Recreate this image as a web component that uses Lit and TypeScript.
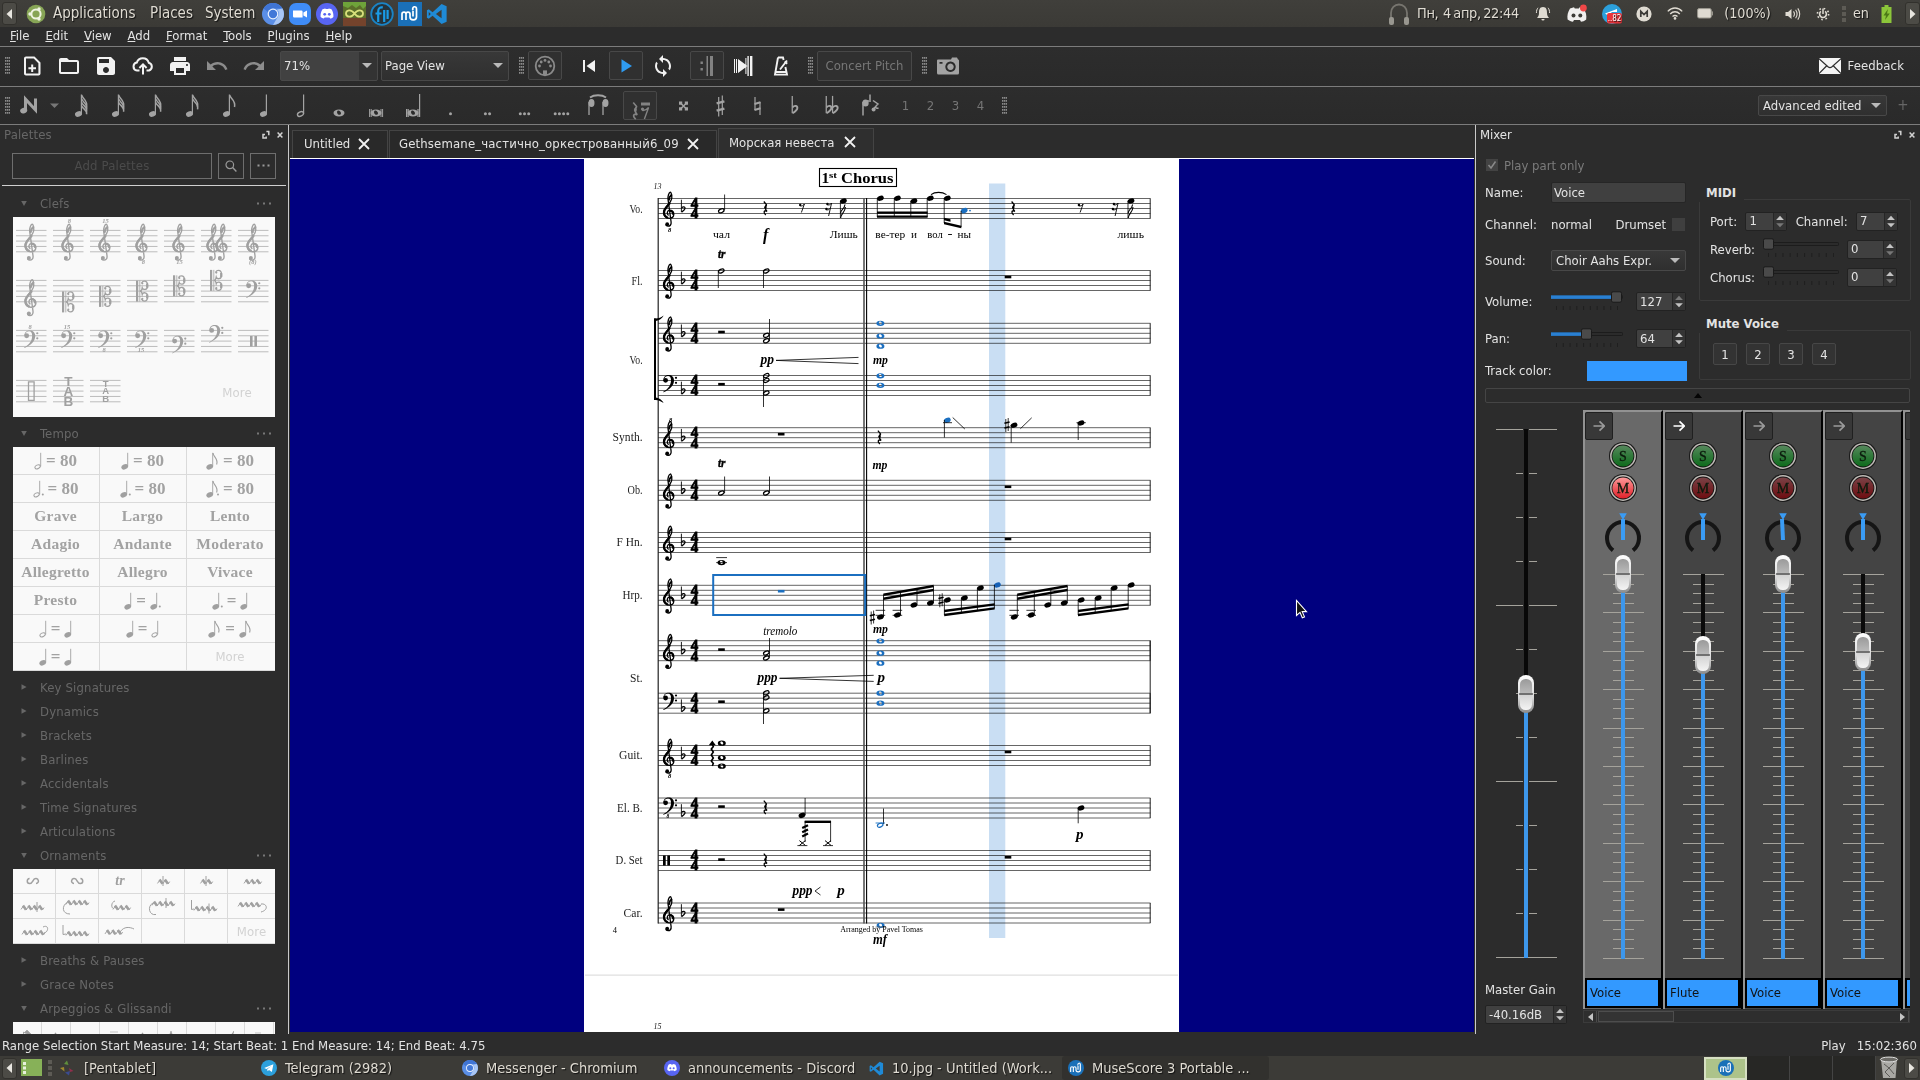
import { LitElement, html, svg, css, nothing } from "lit";
import { customElement } from "lit/decorators.js";

const BLUE = "#1b6fc0";

/* ---------- music glyphs ---------- */
const gClef = (x: number, y: number, c = "#000", s = 1, ott: any = nothing) => svg`
  <g transform="translate(${x} ${y}) scale(${s})" fill="none" stroke=${c} stroke-linecap="round">
    <path stroke-width="1.3" d="M5.6 1.9C3.9 .6 4.6-2.9 7-2.9C9.9-2.9 11.3-.9 11.2 1.2C11 3.9 9 5.1 6.6 5.1C3.2 5.1 .9 2.6 .9-1C.9-6 8.9-9.5 9.2-15.5C9.3-18.5 8.5-21 7.7-21C6.2-20.5 5.1-17 5.4-14L8.5 8.8C8.9 11.8 7.2 13 5.6 13C4.6 13 3.9 12.6 3.5 12"/>
    <path stroke-width="2.2" d="M4.6 4.2C2.4 3.2 1.3 1.2 1.5-1.3C1.9-4.5 5-7 7-9.8"/>
    <path stroke-width="2.1" d="M7.2-2.6C9.3-2.6 10.5-1 10.5 .8"/>
    <path stroke-width="1.9" d="M6.4-13.5C6.3-16 8-17.6 8.8-18.2"/>
    <circle cx="4.6" cy="11" r="1.9" fill=${c} stroke="none"/>
  </g>${ott}`;
const fClef = (x: number, y: number, c = "#000", s = 1) => svg`
  <g transform="translate(${x} ${y}) scale(${s})" fill=${c}>
    <circle cx="2.6" cy="0" r="2.4"/>
    <path d="M.4 0C.4-3.5 2.8-5.2 5.6-5.2C8.8-5.2 11-3.2 11 .2C11 5 7.2 9 .6 12C.2 12.2-.1 11.8 .3 11.5C5.4 8.6 8 5 8-.2C8-2.8 7-4.4 5-4.4C3.2-4.4 1.6-3.2 1.2-1.2Z"/>
    <circle cx="13" cy="-2.5" r="1.1"/><circle cx="13" cy="2.5" r="1.1"/>
  </g>`;
const cClef = (x: number, y: number, c: string) => svg`
  <g transform="translate(${x} ${y})" fill="none" stroke=${c}>
    <path stroke-width="2.2" d="M1.1-10.5V10.5"/><path stroke-width=".8" d="M3.8-10.5V10.5"/>
    <path stroke-width="1.3" d="M4 0C6 0 6-2.5 6.2-3.4C7-1 11.6-.6 11.6-5.4C11.6-10 9.4-10 8.4-10C7-10 5.8-9.2 5.8-8"/>
    <path stroke-width="1.3" d="M4 0C6 0 6 2.5 6.2 3.4C7 1 11.6 .6 11.6 5.4C11.6 10 9.4 10 8.4 10C7 10 5.8 9.2 5.8 8"/>
    <path stroke-width="2.2" d="M11.2-7.5V-3.3M11.2 3.3V7.5"/>
    <circle cx="6.3" cy="-7.8" r="1.1" fill=${c} stroke="none"/><circle cx="6.3" cy="7.8" r="1.1" fill=${c} stroke="none"/>
  </g>`;
const flat = (x: number, y: number, c = "#000", s = 1) => svg`
  <g transform="translate(${x} ${y}) scale(${s})" fill="none" stroke=${c}><path stroke-width=".9" d="M-1.6-9V3.4"/><path stroke-width="1.3" d="M-1.4-.8C.2-2.6 2.4-1.9 2 0C1.7 1.4 0 2.5-1.4 3.4"/></g>`;
const sharp = (x: number, y: number, c = "#000", s = 1) => svg`
  <g transform="translate(${x} ${y}) scale(${s})" stroke=${c}><path stroke-width=".8" d="M-1.2-6V7M1.2-7V6"/><path stroke-width="1.6" d="M-2.6-1.7L2.6-3.1M-2.6 3.1L2.6 1.7"/></g>`;
const head = (x: number, y: number, c = "#000") => svg`<ellipse cx=${x} cy=${y} rx="3.5" ry="2.5" transform=${`rotate(-22 ${x} ${y})`} fill=${c}/>`;
const hhead = (x: number, y: number, c = "#000") => svg`<ellipse cx=${x} cy=${y} rx="2.9" ry="1.8" transform=${`rotate(-24 ${x} ${y})`} fill="none" stroke=${c} stroke-width="1.2"/>`;
const whole = (x: number, y: number, c = "#000") => svg`<path fill=${c} fill-rule="evenodd" d=${`M${x - 4} ${y}a4 2.6 0 1 0 8 0a4 2.6 0 1 0-8 0M${x - 1.5} ${y - 0.6}c0-1.8 2.6-1.5 3 .6c0 1.8-2.6 1.8-3-.6z`}/>`;
const vl = (x: number, a: number, b: number, w = 0.8, c = "#000") => svg`<path d=${`M${x} ${a}V${b}`} stroke=${c} stroke-width=${w}/>`;
const ln = (x1: number, y1: number, x2: number, y2: number, w = 0.8, c = "#000") => svg`<path d=${`M${x1} ${y1}L${x2} ${y2}`} stroke=${c} stroke-width=${w}/>`;
const beam = (x1: number, y1: number, x2: number, y2: number) => svg`<path d=${`M${x1} ${y1 - 1.2}L${x2} ${y2 - 1.2}V${y2 + 1.2}L${x1} ${y1 + 1.2}Z`}/>`;
const rest = (x: number, y: number, c = "#000") => svg`<rect x=${x - 3.3} y=${y - 1.3} width="6.6" height="2.6" fill=${c}/>`;
const qrest = (x: number, y: number, c = "#000", s = 1) => svg`<path transform=${`translate(${x} ${y}) scale(${s})`} fill="none" stroke=${c} stroke-width="1.3" d="M-1.4-6.8L1.4-3.4C-.6-1.6-1 -.6 1.8 3C-1.4 1.8-2.2 4 .6 6.6" stroke-linejoin="bevel"/><path transform=${`translate(${x} ${y}) scale(${s})`} d="M1-4L-1-.8L.8 1.4L1.5-1Z" fill=${c}/>`;
const erest = (x: number, y: number, n = 1, c = "#000") => svg`
  <g transform="translate(${x} ${y})" stroke=${c} fill="none" stroke-width=".9">
    <circle cx="-1.6" cy="-3" r="1.2" fill=${c} stroke="none"/><path d=${`M-1.6-2.2C0-1.6 1.6-2.4 2.6-4L-.4 ${n === 1 ? 4.5 : 9}`}/>
    ${n === 2 ? svg`<circle cx="-2.6" cy="2" r="1.2" fill=${c} stroke="none"/><path d="M-2.6 2.8C-1 3.2 .2 2.6 1 1.4"/>` : nothing}
  </g>`;
const txt = (x: number, y: number, s: string, size: number, len = 0, cls = "", anchor = "start") =>
  len
    ? svg`<text x=${x} y=${y} font-size=${size} class=${cls} text-anchor=${anchor} textLength=${len} lengthAdjust="spacingAndGlyphs">${s}</text>`
    : svg`<text x=${x} y=${y} font-size=${size} class=${cls} text-anchor=${anchor}>${s}</text>`;

const STAVES: [number, string][] = [
  [198.5, "g"], [270.5, "g"], [323.3, "g"], [375.5, "f"], [427.7, "g"], [480.3, "g"], [532.5, "g"],
  [585.3, "g"], [640.7, "g"], [693.2, "f"], [745.5, "g"], [798, "f"], [850.5, "p"], [903, "g"],
];
const LABELS: [string, number, number][] = [
  ["Vo.", 209, 13], ["Fl.", 281, 11], ["Vo.", 360, 13], ["Synth.", 437.5, 30], ["Ob.", 490.5, 15],
  ["F Hn.", 542.5, 26], ["Hrp.", 594.7, 20], ["St.", 677.7, 12.5], ["Guit.", 755.5, 23.5],
  ["El. B.", 807.7, 25.5], ["D. Set", 860.5, 27], ["Car.", 913.5, 19],
];

const staff = ([y, k]: [number, string]) => svg`
  <path class="sl" d=${[0, 5, 10, 15, 20].map((d) => `M658 ${y + d}H1150.5`).join("")}/>
  ${vl(1150.2, y, y + 20, 1, "#222")}
  ${k === "g" ? gClef(662.6, y + 14.7) : k === "f" ? fClef(663, y + 4.8) : svg`<path d=${`M663 ${y + 5}h2.7v10h-2.7zM667.3 ${y + 5}h2.7v10h-2.7z`}/>`}
  ${k === "p" ? nothing : flat(683, y + (k === "g" ? 10.2 : 15.2))}
  <text class="ts" x="694.6" y=${y + 9.7} text-anchor="middle">4</text>
  <text class="ts" x="694.6" y=${y + 19.9} text-anchor="middle">4</text>`;

const arpUp = (x: number, sh: boolean, blueLast = false) => svg`
  ${sh ? sharp(x - 8, 617.5) : nothing}
  ${[[0, 617], [17, 615], [33.5, 605], [50, 603]].map(([d, y]) => svg`${head(x + d, y)}${vl(x + d + 3.1, y, 594.5 - (d / 50) * 8.5)}`)}
  ${ln(x - 4.8, 610.3, x + 4.8, 610.3)}${ln(x - 4.8, 615.3, x + 4.8, 615.3)}${ln(x + 12.2, 610.3, x + 21.8, 610.3)}${ln(x + 12.2, 615.3, x + 21.8, 615.3)}
  ${beam(x + 3, 594.8, x + 53.3, 586)}${beam(x + 3, 598.8, x + 53.3, 590)}
  ${sh ? sharp(x + 60.6, 600.3) : nothing}
  ${[[67, 600], [84, 598], [100, 588], [117, 585]].map(([d, y], i) => svg`${head(x + d, y, blueLast && i === 3 ? BLUE : "#000")}${vl(x + d - 3, y, 615 - ((d - 67) / 50) * 6.5)}`)}
  ${beam(x + 63.8, 615, x + 114.3, 608.4)}${beam(x + 63.8, 611, x + 114.3, 604.4)}`;

const score = () => svg`
  <rect x="290" y="158" width="1184" height="1" fill="#fff"/>
  <rect x="584" y="158" width="595" height="874" fill="#fff"/>
  <rect x="585" y="974.6" width="593" height="1" fill="#d8d8d8"/>
  ${STAVES.map(staff)}
  ${vl(658.2, 198, 923.5, 1.2, "#222")}
  ${vl(864, 198, 923.5, 1.6, "#555")}${vl(866.6, 198, 923.5, 1.1)}
  ${vl(1150.2, 640.7, 713.2, 1, "#222")}
  <path d="M654 318.5h2V400h-2z"/><path d="M654 320.5V318.5C658 319 661 317.5 663.6 315.5C661.5 319.5 658 321 654 321ZM654 397.5V400C658 399.5 661 401 663.6 403C661.5 399 658 397.6 654 397.5Z"/>
  ${LABELS.map(([s, y, w]) => txt(642.6, y + 3.9, s, 12, w, "lab", "end"))}
  <rect x="819.5" y="168.5" width="77" height="18" fill="none" stroke="#000" stroke-width="1.1"/>
  ${txt(821.5, 183, "1", 15.5, 0, "b")}${txt(829, 177.5, "st", 9, 8, "b")}${txt(841, 183, "Chorus", 15.5, 52.5, "b")}
  ${txt(653.5, 188.6, "13", 9, 8, "i lab")}${txt(653.5, 1029.4, "15", 9, 8, "i lab")}
  ${txt(668, 231.5, "8", 6.5, 0, "bi")}${txt(668, 778, "8", 6.5, 0, "bi")}${txt(669, 421.5, "8", 6.5, 0, "bi")}${txt(666.5, 818, "8", 5.5, 0, "bi")}

  ${hhead(721.3, 210.8)}${vl(724.6, 194.5, 210)}
  ${qrest(765.2, 208.3)}${erest(801.8, 208)}${erest(829, 207, 2)}
  ${head(843.4, 201)}${vl(840.4, 201, 218)}<path fill="none" stroke="#000" stroke-width="1.1" d="M840.6 218C841 213 845 213 845.4 207M840.6 213C841 209 844.5 209 845 204.5"/>
  ${[[880.4, 198.3], [897.4, 198.3], [913.9, 201], [930.3, 198.3]].map(([x, y]) => svg`${head(x, y)}${vl(x - 3.1, y, 217)}`)}
  ${beam(877, 212.6, 927.6, 212.6)}${beam(877, 216.6, 927.6, 216.6)}
  <path fill="none" stroke="#000" stroke-width="1.1" d="M931 194.6C935 191.6 942 191.6 946.5 194.6"/>
  ${head(947.3, 198.3)}${vl(944.2, 198, 223)}${beam(944, 223, 961.3, 227)}${beam(944, 219, 950.5, 220.5)}
  ${head(964.2, 210.6, BLUE)}${vl(961.1, 211, 227)}<circle cx="970" cy="210.6" r=".9" fill=${BLUE}/>
  ${qrest(1013, 208.3)}${erest(1080.5, 208)}${erest(1115.5, 207, 2)}
  ${head(1131, 201)}${vl(1128, 201, 218)}<path fill="none" stroke="#000" stroke-width="1.1" d="M1128.2 218C1128.6 213 1132.6 213 1133 207M1128.2 213C1128.6 209 1132 209 1132.6 204.5"/>
  ${txt(713, 238, "чал", 11, 17)}${txt(763, 239.5, "f", 16, 0, "bi")}${txt(829.8, 238, "Лишь", 11, 28)}
  ${txt(875.3, 238, "ве-тер", 11, 30)}${txt(911, 238, "и", 11, 6)}${txt(927.3, 238, "вол", 11, 15.5)}${txt(947.5, 238, "-", 12, 5)}${txt(957.5, 238, "ны", 11, 13.5)}${txt(1117.5, 238, "лишь", 11, 26.5)}

  ${txt(718, 258, "tr", 12, 7.5, "bi k")}
  ${hhead(721.3, 271)}${vl(718.3, 271, 288)}${hhead(766.3, 271)}${vl(763.5, 271, 288)}${rest(1008, 277)}

  ${rest(721.5, 332)}${hhead(766.3, 335.3)}${hhead(766.3, 340.8)}${vl(769.5, 319, 341)}
  ${[323.3, 336, 346.2].map((y) => whole(880.4, y, BLUE))}
  ${rest(721.5, 384.2)}${[375.6, 380.4, 393].map((y) => hhead(766.3, y))}${vl(763.5, 375.5, 407)}
  ${[375.8, 385.3].map((y) => whole(880.4, y, BLUE))}
  ${txt(760.5, 363.5, "pp", 15, 13.5, "bi")}<path fill="none" stroke="#000" stroke-width=".8" d="M858.5 357.4L776 360.4L858.5 363.6"/>${txt(873, 363.5, "mp", 13, 15, "bi")}

  ${rest(781.2, 434.2)}${qrest(879.3, 437.5)}
  ${head(947.3, 420.3, BLUE)}${vl(944.4, 420, 437.5)}${ln(943, 422.7, 952, 422.7)}${ln(952.7, 417.5, 964.8, 429)}
  ${sharp(1007, 425)}${head(1014, 425.2)}${vl(1011.2, 425, 442.7)}${ln(1020.4, 428.7, 1031.7, 417.8)}
  ${head(1081, 423)}${vl(1078.2, 423, 440)}${ln(1076.5, 422.7, 1085.8, 422.7)}
  ${txt(872.5, 468.5, "mp", 13, 15, "bi")}
  ${txt(718, 467, "tr", 12, 7.5, "bi k")}
  ${hhead(721.3, 493)}${vl(724.6, 476.5, 493)}${hhead(766.3, 493)}${vl(769.5, 476.5, 493)}${rest(1008, 486.8)}
  ${whole(721.5, 562.6)}${ln(716.2, 557.6, 727, 557.6)}${ln(716.2, 562.6, 727, 562.6)}${rest(1008, 539)}

  <rect x="713.2" y="575" width="152" height="40" fill="none" stroke=${BLUE} stroke-width="2"/>
  ${rest(781.2, 591.2, BLUE)}
  ${arpUp(880.4, true, true)}${arpUp(1014.2, false)}
  ${txt(873, 632.5, "mp", 13, 15, "bi")}${txt(763.3, 634.6, "tremolo", 11.5, 34, "it")}

  ${rest(721.5, 649.6)}${hhead(766.3, 653)}${hhead(766.3, 658)}${vl(769.5, 638, 657.5)}
  ${[641, 653.2, 663.2].map((y) => whole(880.4, y, BLUE))}
  ${txt(757.5, 681.5, "ppp", 15, 20, "bi")}<path fill="none" stroke="#000" stroke-width=".8" d="M873.7 675.3L779.6 678.3L873.7 681.4"/>${txt(877.5, 681.5, "p", 15, 0, "bi")}
  ${rest(721.5, 701.7)}${[692.8, 697.8, 710.8].map((y) => hhead(766.3, y))}${vl(763.5, 693, 724)}
  ${[693.2, 703.2].map((y) => whole(880.4, y, BLUE))}

  ${[743.2, 757.8, 766.2].map((y) => whole(721.8, y))}
  <path d="M712.3 740.6L715.8 745.2H708.8Z"/><path d="M712.3 744l1 2.5-2 2.5 2 3-2 3 2 3-2 3 2 2.5-1 2.5" fill="none" stroke="#000" stroke-width="1.6"/>
  ${rest(1008, 752)}

  ${rest(721.5, 806.6)}${qrest(765.2, 807.5)}${head(802, 815.4)}${vl(805.1, 798, 815)}
  ${beam(804.7, 821.8, 831, 821.8)}${vl(805.1, 821, 842)}${vl(830.6, 821, 842)}
  ${[828, 832.2, 836.4].map((y) => ln(802.2, y, 808, y - 2.8, 2.2))}
  ${[802.4, 828].map((x) => svg`${ln(x - 3, 840.6, x + 3, 845.4, 1)}${ln(x - 3, 845.4, x + 3, 840.6, 1)}${ln(x - 5, 845.6, x + 5, 845.6)}`)}
  ${hhead(880.2, 825.2, BLUE)}${vl(883.5, 808.5, 824)}${ln(875.6, 823, 885, 823, 0.9, BLUE)}<circle cx="887" cy="825" r=".9"/>
  ${head(1081, 808)}${vl(1078.2, 808, 823.3)}${txt(1076, 839, "p", 15, 0, "bi")}

  ${rest(721.5, 859.6)}${qrest(765.2, 860.5)}${rest(1008, 857.3)}
  ${txt(792.5, 895, "ppp", 15, 20, "bi")}<path fill="none" stroke="#000" stroke-width=".8" d="M820.5 887L815 891L820.5 895"/>${txt(837.3, 895, "p", 15, 0, "bi")}

  ${rest(781.2, 909.6)}${whole(880.6, 925.3, BLUE)}${ln(875.5, 927, 886, 927, 0.7, "#555")}
  ${txt(840.3, 931.5, "Arranged by Pavel Tomas", 8.6, 82.5)}${txt(873, 944.3, "mf", 14, 14, "bi")}${txt(612.7, 933.3, "4", 8.5, 0)}
  <rect x="989" y="183.5" width="16.3" height="754.5" class="cur"/>
  <path d="M1296.5 600.5V615.5L1300 612.4L1302.3 617.8L1304.5 616.9L1302.2 611.6H1306.5Z" fill="#111" stroke="#fff" stroke-width="1.1"/>`;

/* ---------- small widgets ---------- */
const mat = (d: string, c = "#f2f2f2") => html`<svg width="24" height="24" viewBox="0 0 24 24"><path fill=${c} d=${d}/></svg>`;
const grip = html`<svg class="grip" width="5" height="18" viewBox="0 0 5 18">${[0, 1, 2, 3, 4, 5].map((i) => svg`<path d=${`M0 ${i * 3 + 0.9}h1.4M1.9 ${i * 3 + 0.9}h1.4M3.8 ${i * 3 + 0.9}h1.4`} stroke="#8a8a8a" stroke-width="1.6"/>`)}</svg>`;
const sq = (body: any, w = 37) => html`<svg width=${w} height="38" viewBox=${`0 0 ${w} 38`}>${body}</svg>`;
const G = "#a3a3a3";
const tnote = (n: number) => sq(svg`
  <ellipse cx="16.5" cy="27" rx="3.6" ry="2.7" transform="rotate(-20 16.5 27)" fill=${G}/>
  <path d="M19.4 7.5V26.5" stroke=${G} stroke-width="1.2"/>
  ${Array.from({ length: n }, (_, i) => svg`<path fill="none" stroke=${G} stroke-width="1.5" d=${`M19.6 ${8 + i * 3.6}C20.5 ${12 + i * 3.4} 26 ${13 + i * 3.4} ${24.5} ${20 + i * 2.4}`}/>`)}`);
const wholeBody = (x: number, y: number) => svg`<path fill=${G} fill-rule="evenodd" d=${`M${x - 5.5} ${y}a5.5 3.4 0 1 0 11 0a5.5 3.4 0 1 0-11 0M${x - 2} ${y - 0.8}c0-2.6 3.4-2 4 .8c0 2.6-3.4 2.6-4-.8z`}/>`;
const dots = (n: number) => sq(svg`${Array.from({ length: n }, (_, i) => svg`<circle cx=${18.5 + (i - (n - 1) / 2) * 4.2} cy="26.7" r="1.5" fill=${G}/>`)}`);
const spin = (v: string, cls: string, u = true, d = true) => html`<div class="spin ${cls}"><span>${v}</span><svg width="13" height="19" viewBox="0 0 13 19"><path d="M2.3 7.8H10.7L6.5 3.4Z" fill=${u ? "#c4c4c4" : "#777"}/><path d="M2.3 11.4H10.7L6.5 15.8Z" fill=${d ? "#c4c4c4" : "#777"}/></svg></div>`;
const slider = (w: number, p: number) => html`<svg width=${w} height="22" viewBox=${`0 0 ${w} 22`}>
  <rect x=".5" y="4.5" width=${w - 1} height="3" rx="1" fill="#2b2b2b" stroke="#1c1c1c"/>
  ${p > 0 ? svg`<rect x="0" y="4.3" width=${p} height="3.6" fill="#2a80d2"/>` : nothing}
  ${Array.from({ length: 10 }, (_, i) => svg`<path d=${`M${5.5 + (i * (w - 11)) / 9} 15v4`} stroke="#1f1f1f"/>`)}
  <rect x=${p + 0.5} y=".8" width="10" height="10.4" rx="1.5" fill="#4a4a4a" stroke="#1a1a1a"/></svg>`;
const dockBtns = html`<svg class="dock" width="24" height="12" viewBox="0 0 24 12"><g fill="none" stroke="#d2d2d2" stroke-width="1.5"><path d="M4.4 2.6H6.8V6.2M3 5.4H1V9H4.2V7.4M15.6 3.4L20.4 8.4M20.4 3.4L15.6 8.4"/></g></svg>`;
const capGrad = svg`<defs>
  <linearGradient id="cap" x1="0" y1="0" x2="0" y2="1"><stop offset="0" stop-color="#9a9a9a"/><stop offset=".5" stop-color="#bdbdbd"/><stop offset=".52" stop-color="#d4d4d4"/><stop offset="1" stop-color="#f4f4f4"/></linearGradient>
  <linearGradient id="rim" x1="0" y1="0" x2="0" y2="1"><stop offset="0" stop-color="#fff"/><stop offset=".6" stop-color="#d8d8d8"/><stop offset="1" stop-color="#8a8a8a"/></linearGradient></defs>`;
const cap = (x: number, y: number) => svg`<rect x=${x - 8} y=${y - 19} width="16" height="38" rx="8" fill="url(#rim)"/><rect x=${x - 6} y=${y - 15} width="12" height="31" rx="5.5" fill="url(#cap)"/><path d=${`M${x - 7} ${y}h14`} stroke="#333" stroke-width="1.1"/>`;
const roundBtn = (x: number, y: number, s: string, id: string, a: string, b: string) => svg`
  <defs><linearGradient id=${id} x1="0" y1="0" x2="0" y2="1"><stop offset="0" stop-color=${a}/><stop offset="1" stop-color=${b}/></linearGradient></defs>
  <circle cx=${x} cy=${y} r="14" fill="#191919"/><circle cx=${x} cy=${y} r="12.9" fill="#bfbbb6"/><circle cx=${x} cy=${y} r="11.4" fill="#151515"/><circle cx=${x} cy=${y} r="10.6" fill=${`url(#${id})`}/>
  <text x=${x} y=${y + 5.2} text-anchor="middle" class="rb">${s}</text>`;

/* strip drawing; local origin is screen y 440, x centre 38 */
const stripBody = (lvl: number, mute: boolean, tilt: number) => html`<svg width="76" height="538" viewBox="0 440 76 538">
  ${capGrad}
  ${roundBtn(38, 456, "S", "solo", "#56885c", "#0d6b1b")}
  ${mute ? roundBtn(38, 488, "M", "muteOn", "#ff9a9a", "#e01f28") : roundBtn(38, 488, "M", "muteOff", "#7a4246", "#6d0c10")}
  <path d="M28 550.4A16 16 0 1 1 48 550.4" fill="none" stroke="#151515" stroke-width="4"/>
  <path d="M34.2 513.3H41.8L38 520Z" fill="#3a9cf5"/><path d=${`M${38 - tilt} 519L38 540`} stroke="#3a9cf5" stroke-width="4"/>
  <g stroke="#a5a39c" stroke-width="1">${Array.from({ length: 41 }, (_, i) => {
    const y = Math.round(574 + i * 9.6) + 0.5;
    return i % 4 ? svg`<path d=${`M28 ${y}h21`}/>` : svg`<path d=${`M18 ${y}h41`}/>`;
  })}</g>
  <rect x="36" y="574" width="4" height="385" fill="#0a0a0a"/><rect x="36" y=${lvl} width="4" height=${959 - lvl} fill="#3d97ec"/>
  ${cap(38, lvl)}
</svg>`;

const STRIPS: { n: string; lvl: number; mute: boolean; on: boolean; tilt: number }[] = [
  { n: "Voice", lvl: 574, mute: true, on: false, tilt: 0 },
  { n: "Flute", lvl: 655, mute: false, on: true, tilt: 0 },
  { n: "Voice", lvl: 574, mute: false, on: false, tilt: 1 },
  { n: "Voice", lvl: 652, mute: false, on: false, tilt: 0 },
];

/* ---------- palettes ---------- */
const PC = "#a0a0a0";
const clefGrid = () => {
  const cells: ((x: number, y: number) => any)[] = [];
  const o = (dy: number, s: string) => (x: number, y: number) => svg`${gClef(x + 8, y + 16, PC, 1.06)}<text x=${x + 17 - s.length * 0.7} y=${y + dy} font-size="6.5" class="bi" fill=${PC} text-anchor="middle">${s}</text>`;
  const f = (dl: number, s = "", dy = 0) => (x: number, y: number) => svg`${fClef(x + 8, y + dl, PC, 1.02)}${s ? svg`<text x=${x + 14} y=${y + dy} font-size="6.5" class="bi" fill=${PC} text-anchor="middle">${s}</text>` : nothing}`;
  const c = (dl: number) => (x: number, y: number) => cClef(x + 9, y + dl, PC);
  cells.push(
    (x, y) => gClef(x + 8, y + 16, PC, 1.06), o(-7.4, "8"), o(-7.4, "15"), o(34, "8"), o(34, "15"),
    (x, y) => svg`${gClef(x + 5, y + 16, PC, 1.06)}${gClef(x + 14, y + 16, PC, 1.06)}`, o(34, "(8)"),
    (x, y) => gClef(x + 8, y + 21.5, PC, 1.06), c(21.5), c(16), c(10.7), c(5.4), c(0), f(5.4),
    f(5.4, "8", -1), f(5.4, "15", -1), f(5.4, "8", 22), f(5.4, "15", 22), f(10.7), f(0),
    (x, y) => svg`<path fill=${PC} d=${`M${x + 12} ${y + 5.5}h2.6v10.6h-2.6zM${x + 16.4} ${y + 5.5}h2.6v10.6h-2.6z`}/>`,
    (x, y) => svg`<path fill="none" stroke=${PC} stroke-width="1.3" d=${`M${x + 12.5} ${y + 1.5}h5.6v18.4h-5.6z`}/>`,
    (x, y) => svg`${["T", "A", "B"].map((s, i) => svg`<text x=${x + 15.3} y=${y + 5.5 + i * 10.2} class="tab" fill=${PC} font-size="13.5">${s}</text>`)}`,
    (x, y) => svg`${["T", "A", "B"].map((s, i) => svg`<text x=${x + 15.6} y=${y + 6.5 + i * 7.3} class="tab" fill=${PC} font-size="9.5">${s}</text>`)}`,
  );
  return html`<svg class="clefs" width="262" height="200" viewBox="0 0 262 200">
    ${cells.map((fn, i) => {
      const x = 3 + (i % 7) * 37, y = 13.4 + Math.floor(i / 7) * 50;
      return svg`<path stroke="#bcbcbc" stroke-width="1" d=${[0, 1, 2, 3, 4].map((k) => `M${x} ${y + k * 5.35}h30.5`).join("")}/>${fn(x, y)}`;
    })}
    <text x="224" y="180" text-anchor="middle" class="more">More</text></svg>`;
};
const tn = (k: string) => html`<svg class="tn" width=${k.includes("e") ? 13 : k.includes(".") ? 11 : 8} height="18" viewBox=${`0 0 ${k.includes("e") ? 13 : k.includes(".") ? 11 : 8} 18`}>
  ${k[0] === "h" ? svg`<ellipse cx="3.6" cy="14.8" rx="2.8" ry="1.8" transform="rotate(-25 3.6 14.8)" fill="none" stroke=${PC} stroke-width="1"/>` : svg`<ellipse cx="3.7" cy="14.8" rx="3.5" ry="2.5" transform="rotate(-25 3.7 14.8)" fill=${PC}/>`}
  <path d="M6.7 .8V14.4" stroke=${PC} stroke-width=".9"/>
  ${k.includes("e") ? svg`<path d="M7 1C7.4 5 12.8 7 10.6 12.5" fill="none" stroke=${PC} stroke-width="1.1"/>` : nothing}
  ${k.includes(".") ? svg`<circle cx=${k.includes("e") ? 12 : 9.8} cy="14.5" r="1" fill=${PC}/>` : nothing}</svg>`;
const TEMPO: any[] = [
  html`${tn("h")}<b>= 80</b>`, html`${tn("q")}<b>= 80</b>`, html`${tn("e")}<b>= 80</b>`,
  html`${tn("h.")}<b>= 80</b>`, html`${tn("q.")}<b>= 80</b>`, html`${tn("e.")}<b>= 80</b>`,
  ..."Grave Largo Lento Adagio Andante Moderato Allegretto Allegro Vivace Presto".split(" ").map((s) => html`<em>${s}</em>`),
  html`${tn("q")}<b>=</b>${tn("q.")}`, html`${tn("q.")}<b>=</b>${tn("q")}`,
  html`${tn("h")}<b>=</b>${tn("q")}`, html`${tn("q")}<b>=</b>${tn("h")}`, html`${tn("e")}<b>=</b>${tn("e")}`,
  html`${tn("q")}<b>=</b>${tn("q")}`, "", html`<span class="more">More</span>`,
];
const zig = (n: number, x: number, y: number) => svg`<path fill="none" stroke=${PC} stroke-width="1" d=${`M${x} ${y + 2.4}l2.4-3.4` + "m2.8 4l2.6-4".repeat(n) + "m2.8 4l1.6-2.4"}/><path fill="none" stroke=${PC} stroke-width="2.6" d=${`M${x + 2} ${y - 1.4}` + "l3 4.2m2.4-4.2".repeat(n) + "l3 4.2"}/>`;
const thin = (d: string) => svg`<path fill="none" stroke=${PC} stroke-width="1" d=${d}/>`;
const turn = svg`<path fill="none" stroke=${PC} stroke-width="1.5" d="M18 14.5C14 14 15.5 9 18.5 9.6C21.5 10 21 14.6 24.5 14.6C27.5 14.4 27.5 9.5 24.4 9.4"/>`;
const ORN: any[] = [
  svg`<g transform="translate(41 0) scale(-1 1)">${turn}</g>`, turn,
  svg`<text x="21" y="16" text-anchor="middle" class="bi" font-size="14" fill=${PC}>tr</text>`,
  svg`${zig(1, 15.5, 12)}${thin("M21 7V17")}`, svg`${zig(1, 15.5, 12)}${thin("M21 7V17")}`, zig(2, 13, 12),
  svg`${zig(3, 8, 13)}${thin("M24 8V18")}`, svg`${zig(3, 10, 8)}${thin("M11 8.5C5.5 12 6 20 14 20")}`,
  svg`${zig(2, 14, 13)}${thin("M16 7C12 8 12 14 14.5 14.5")}`, svg`${zig(3, 10, 9)}${thin("M11 9C5 12 7 22 14 20.5M24 4V14")}`,
  svg`${zig(3, 9, 14)}${thin("M6.5 6V15.5L9 15M24 9.5V19.5")}`, svg`${zig(3, 7, 10)}${thin("M30 10C36 9 38 16 30 18")}`,
  svg`${zig(3, 9, 13)}${thin("M31 14C36 13 36 5 30 8")}`, svg`${zig(3, 10, 14)}${thin("M7 6V15.5L10 15")}`,
  svg`${zig(2, 6, 12.5)}${thin("M21 13C25 7 31 8 35 10")}`, nothing, nothing,
];

@customElement("app-root")
export class AppRoot extends LitElement {
  static styles = css`
    :host { display: flex; flex-direction: column; width: 1920px; height: 1080px; overflow: hidden; background: #2c2c2c; color: #e3e3e3;
      font-family: "DejaVu Sans Condensed", "DejaVu Sans", sans-serif; font-stretch: condensed; font-size: 13px; line-height: 1; }
    * { box-sizing: border-box; }
    svg { display: block; flex: none; }
    .row { display: flex; align-items: center; white-space: nowrap; }
    .sp { flex: 1; }
    .panel { height: 27px; background: linear-gradient(#403f3b, #3b3a36); color: #dfdbd2; font-size: 15px; text-shadow: 1px 1px 1px #111; flex: none; }
    .ebtn { width: 15px; height: 23px; margin-left: 2px; border-radius: 3px; background: #4c4b46; border: 1px solid #32312d; display: grid; place-items: center; }
    .pl { display: grid; grid-template-columns: 26px 27px 97px 55px 57px 27px 27px 27px 27px 28px 28px 27px; align-items: center; justify-items: start; }
    .pr { display: grid; grid-template-columns: 37px 110px 32px 35px 35px 30px 31px 30px 55px 35px 26px 16px 18px 33px 17px; align-items: center; justify-items: center; }
    .pr .l { justify-self: start; font-size: 14.4px; letter-spacing: -0.3px; word-spacing: -1.5px; }
    .pr .pc { font-size: 14.2px; }
    .menu { height: 19px; padding: 0 0 2px 10px; flex: none; }
    .menu span { margin-right: 15.9px; }
    .tb { border-top: 1px solid #7c7c7c; flex: none; background: linear-gradient(#2d2d2d, #2a2a2a); }
    .tb1 { height: 40px; padding: 0 0 2px 5px; }
    .tb2 { height: 38px; padding-left: 5px; color: #8f8f8f; }
    .m2 { width: 3px; flex: none; }
    .cell { width: 37px; display: grid; place-items: center; flex: none; }
    .c41 { width: 41px; margin-left: 6px; } .c40 { width: 40px; margin-right: 7px; } .c38 { width: 38px; }
    .combo { background: linear-gradient(#383838, #2f2f2f); border: 1px solid #484848; border-radius: 2px; display: flex; align-items: center; justify-content: space-between; padding-bottom: 1px; }
    .arr { width: 0; height: 0; border: 5px solid transparent; border-top-color: #b9b9b9; border-bottom: 0; margin-right: 5px; }
    .zoom { width: 98px; height: 30px; margin-left: 8px; padding-left: 3px; background: linear-gradient(90deg, #414141 78px, #333 78px); }
    .pv { width: 128px; height: 30px; margin-left: 3px; padding-left: 3px; }
    .pbtn { width: 34px; height: 29px; border: 1px solid #484848; background: #303030; border-radius: 2px; display: grid; place-items: center; flex: none; }
    .rr { margin-left: 6px; }
    .m4 { margin-left: 4px; } .m9 { margin-left: 9px; } .m10 { margin-left: 10px; } .m8 { margin-left: 8px; } .m1 { margin-left: 2px; }
    .cp { width: 95px; height: 30px; color: #777; margin-left: 4px; }
    .fb { margin: 0 16px 0 7px; letter-spacing: 0.1px; }
    .adv { width: 129px; height: 21px; padding-left: 4px; color: #e3e3e3; }
    .plus { color: #666; font-size: 15px; width: 20px; text-align: center; margin: 0 7px 0 6px; }
    .num { width: 25px; text-align: center; color: #757575; padding-bottom: 1px; }
    .n1 { margin-left: 4px; }
    .main { display: flex; height: 910px; border-top: 1px solid #7c7c7c; flex: none; }
    .left { width: 289px; border-right: 1px solid #c9c9c9; display: flex; flex-direction: column; overflow: hidden; height: 909px; color: #676767; flex: none; letter-spacing: 0.16px; }
    .hd { height: 21px; padding: 0 2px 2px 4px; display: flex; align-items: center; justify-content: space-between; flex: none; }
    .search { display: flex; gap: 6px; padding: 7px 0 0 12px; height: 39px; flex: none; }
    .box { width: 26px; height: 26px; border: 1px solid #6e6e6e; display: grid; place-items: center; padding-bottom: 1px; }
    .addp { width: 200px; color: #4b4b4b; }
    .rule { height: 1px; margin: 0 2px 6px; background: #d0d0d0; flex: none; }
    .ti { height: 24px; display: flex; align-items: center; padding: 0 0 2px 20px; flex: none; }
    .ti svg { margin-right: 12px; }
    .ti .dt { margin: 0 16px 0 auto; }
    .pal { margin: 1px 0 5px 13px; width: 262px; background: #f9f9f9; flex: none; overflow: hidden; }
    .tempo { display: grid; grid-template-columns: 87px 87px 88px; grid-auto-rows: 28px; background: #f9f9f9; height: 224px; letter-spacing: 0; }
    .tempo > div { display: flex; align-items: center; justify-content: center; gap: 4px; padding-right: 1px; border-right: 1px solid #dadada; border-bottom: 1px solid #dadada; color: #a2a2a2; font-family: "Liberation Serif", serif; font-stretch: normal; }
    .tempo > div:nth-child(3n) { border-right: 0; padding-right: 2px; }
    .tempo b { font-size: 17px; } .tempo em { font-style: normal; font-weight: bold; font-size: 15.5px; letter-spacing: 0.25px; padding-bottom: 2px; }
    .orn { display: grid; grid-template-columns: repeat(6, 43px) 4px; grid-auto-rows: 25px; height: 75px; }
    .orn > div { border-right: 1px solid #dadada; border-bottom: 1px solid #dadada; display: grid; place-items: center; }
    .orn > div:nth-child(6n) { border-right: 0; grid-column: span 2; }
    .arp { display: grid; grid-template-columns: repeat(9, 29px); height: 12px; }
    .arp > div { border-right: 1px solid #dadada; display: flex; justify-content: center; align-items: end; }
    .more { color: #d2d2d2; fill: #d2d2d2; font: 13px "DejaVu Sans Condensed", "DejaVu Sans", sans-serif; }
    .bi { font-family: "Liberation Serif", serif; font-style: italic; font-weight: bold; font-stretch: normal; letter-spacing: 0; }
    .tab { font-family: "Liberation Sans", sans-serif; font-weight: bold; text-anchor: middle; font-stretch: normal; letter-spacing: 0; }
    .center { width: 1186px; display: flex; flex-direction: column; padding-left: 1px; flex: none; }
    .tabs { height: 33px; display: flex; align-items: flex-end; padding-left: 2px; flex: none; }
    .tab1 { height: 28px; display: flex; align-items: center; justify-content: space-between; border: 1px solid #444; border-bottom: 0; background: #292929; padding: 0 17px 2px 11px; margin-right: 1px; }
    .w1 { width: 96px; } .w2 { width: 328px; padding-left: 9px; letter-spacing: 0.15px; } .w3 { width: 156px; height: 30px; background: #2f2f2f; padding: 0 17px 3px 10px; }
    .canvas { width: 1184px; height: 874px; background: #00007f; }
    .canvas text { font-family: "Liberation Serif", serif; font-stretch: normal; }
    .canvas .ts { font-size: 15px; font-weight: bold; stroke: #000; stroke-width: 0.8px; }
    .canvas .b { font-weight: bold; } .canvas .bi { font-weight: bold; font-style: italic; } .canvas .i, .canvas .it { font-style: italic; }
    .canvas .k { stroke: #000; stroke-width: 0.4px; }
    .canvas .lab { fill: #222; }
    .sl { stroke: #555; stroke-width: 0.9px; }
    .cur { fill: #c9def3; mix-blend-mode: multiply; }
    .right { flex: 1; border-left: 1px solid #c9c9c9; display: flex; flex-direction: column; }
    .cols { display: flex; gap: 12px; padding-left: 9px; height: 230px; margin-top: 9px; flex: none; }
    .form { width: 202px; }
    .form > div { display: flex; align-items: center; }
    .lb { width: 66px; }
    .r1 { height: 20px; color: #7b7b7b; } .r2 { height: 34px; } .r3 { height: 31px; } .r4 { height: 41px; } .r5 { height: 41px; } .r6 { height: 33px; } .r7 { height: 31px; }
    .cb { width: 12px; height: 12px; background: #434343; margin: 0 6px 0 1px; display: grid; place-items: center; }
    .dr { margin-left: auto; margin-right: 6px; }
    .cb2 { width: 13px; height: 13px; background: #3f3f3f; margin-right: 2px; }
    .inp { width: 135px; height: 21px; background: #404040; border: 1px solid #262626; border-radius: 2px; padding: 3px 2px; }
    .snd { width: 135px; height: 21px; padding-left: 4px; }
    .spin { display: flex; align-items: center; height: 19px; background: #404040; border: 1px solid #222; border-radius: 2px; justify-content: space-between; overflow: hidden; flex: none; }
    .spin span { padding: 0 0 1px 3px; }
    .spin svg { background: #343434; border-left: 1px solid #262626; }
    .s49 { width: 50px; margin-right: 1px; } .s41 { width: 42px; } .s80 { width: 82px; }
    .sw { width: 100px; height: 20px; background: #3399ff; margin-left: auto; }
    .grp { width: 212px; display: flex; flex-direction: column; padding-top: 28px; }
    .gt { font-weight: bold; align-self: flex-start; padding: 3px 8px 3px 7px; background: #2c2c2c; z-index: 1; }
    .gb { border: 1px solid #3a3a3a; border-radius: 2px; margin-top: -3px; }
    .gb1 { height: 102px; padding: 7px 12px 0 10px; }
    .gb1 > div { height: 28px; display: flex; align-items: center; justify-content: space-between; }
    .g2 { margin-top: 13px; }
    .gb2 { height: 50px; padding: 12px 0 0 13px; display: flex; gap: 9px; }
    .mb { width: 24px; height: 22px; border: 1px solid #474747; background: #333; border-radius: 2px; display: grid; place-items: center; }
    .coll { height: 15px; width: 425px; margin: 3px 0 7px 9px; border: 1px solid #454545; border-radius: 2px; display: grid; place-items: center; flex: none; }
    .mix { display: flex; flex: 1; }
    .master { width: 107px; padding-left: 9px; }
    .master .mg { padding-top: 1px; height: 23px; }
    .strips { width: 327px; overflow: hidden; }
    .sr { display: flex; height: 599px; width: 400px; }
    .strip { width: 80px; border-left: 2px solid #929292; border-top: 2px solid #929292; border-right: 2px solid #000; background: #444; flex: none; }
    .strip.sel { background: #696969; }
    .ab { width: 28px; height: 28px; background: #383838; border: 1px solid #202020; border-radius: 2px; display: grid; place-items: center; }
    .nm { height: 30px; width: 76px; background: #3399ff; border: 2px solid #000; color: #111; padding: 6px 3px; border-right-width: 3px; }
    .rb { font: 14px "Liberation Serif", serif; fill: #0b1a0c; stroke: #0b1a0c; stroke-width: 0.3px; }
    .sb { height: 13px; margin-top: 1px; display: flex; background: #2e2e2e; border: 1px solid #3b3b3b; }
    .sbb { width: 13px; border-right: 1px solid #4a4a4a; display: grid; place-items: center; }
    .th { width: 76px; border: 1px solid #4d4d4d; margin: 0 auto 0 1px; background: #333; }
    .status { height: 22px; padding: 0 3px 0 2px; font-size: 13px; flex: none; letter-spacing: 0.03px; }
    .status .pp { margin-right: 11px; }
    .task { height: 24px; flex: none; background: #3c3b37; color: #dfdbd2; font-size: 14.5px; text-shadow: 1px 1px 1px #111; display: grid; align-items: center; overflow: hidden; white-space: nowrap;
      grid-template-columns: 19px 29px 10px 26px 177px 201px 202px 205px 193px 207px 435px 43px 43px 43px 43px 26px 18px; }
    .task .ebtn { height: 21px; }
    .tk { display: flex; align-items: center; gap: 8px; height: 24px; }
    .act { background: #32312e; border-radius: 3px; padding-left: 6px; width: 207px; }
    .ws { height: 24px; background: #272725; border-right: 1px solid #444; }
    .wsa { height: 23px; background: #adc38a; border: 2px solid #d6dfc2; display: grid; place-items: center; }
  `;

  item(label: string, open = false) {
    return html`<div class="ti"><svg width="8" height="8" viewBox="0 0 8 8"><path fill="#676767" d=${open ? "M1.2 2H6.8L4 7Z" : "M1.5 1.2V6.8L6.6 4Z"}/></svg>${label}
      ${open ? html`<svg class="dt" width="16" height="3" viewBox="0 0 16 3"><path fill="#777" d="M1 .5h2v2h-2zM7 .5h2v2h-2zM13 .5h2v2h-2z"/></svg>` : nothing}</div>`;
  }

  render() {
    const tri = (l: boolean) => html`<svg width="7" height="10" viewBox="0 0 7 10"><path fill="#e8e6e0" d=${l ? "M6 0V10L.5 5Z" : "M1 0V10L6.5 5Z"}/></svg>`;
    const discord = (s: number, bg = "#5865f2") => html`<svg width=${s} height=${s} viewBox="0 0 22 22"><circle cx="11" cy="11" r="11" fill=${bg}/><path fill="#fff" d="M6.5 6.2C8 5.5 9 5.4 9.3 5.4L9.7 6.1H12.3L12.7 5.4C13.5 5.5 14.5 5.8 15.5 6.2C17 8.5 17.6 11 17.4 13.9C16.2 15 15 15.4 14.2 15.6L13.4 14.4H8.6L7.8 15.6C6.6 15.3 5.6 14.8 4.6 13.9C4.4 11 5 8.5 6.5 6.2Z"/><circle cx="8.7" cy="11.3" r="1.4" fill=${bg}/><circle cx="13.3" cy="11.3" r="1.4" fill=${bg}/></svg>`;
    const chromium = (s: number) => html`<svg width=${s} height=${s} viewBox="0 0 22 22"><circle cx="11" cy="11" r="11" fill="#5a8ee6"/><path d="M1.5 5.5A11 11 0 0 1 20.5 5.5H11A5.5 5.5 0 0 0 6 9Z" fill="#3f74d4"/><path d="M20.5 5.5A11 11 0 0 1 11 22L15.8 13.7A5.5 5.5 0 0 0 15 6.5Z" fill="#a8c6f5"/><circle cx="11" cy="11" r="5.4" fill="#eaf1fd"/><circle cx="11" cy="11" r="4.2" fill="#4278d8"/></svg>`;
    const vscode = (s: number) => html`<svg width=${s} height=${s} viewBox="0 0 24 24"><path fill="#1f8ad6" d="M17 1L22.5 3.6V20.4L17 23L7.2 14L3 17.2L1 16.2V7.8L3 6.8L7.2 10ZM17 7.4L10.8 12L17 16.6ZM3 9.8V14.2L5.2 12Z"/></svg>`;
    const mu = (s: number, round: boolean) => html`<svg width=${s} height=${s} viewBox="0 0 24 24"><rect width="24" height="24" rx=${round ? 12 : 0} fill="#1a70b8"/><path fill="none" stroke="#fff" stroke-width="1.7" d="M4 18V12C4 9.4 8 9.4 8 12V18M8 12C8 9.4 12 9.4 12 12V15C12 18.8 18.5 18.8 18.5 15V7C18.5 3.6 14 4 14.8 8.4M15 9V14.5"/></svg>`;
    const telegram = html`<svg width="16" height="16" viewBox="0 0 20 20"><circle cx="10" cy="10" r="10" fill="#2ca0dc"/><path fill="#fff" d="M4 10L15.5 5.3L13.6 15L10 12.4L8.2 14.2L7.8 11.6L13 7.5L6.8 11.1Z"/></svg>`;
    return html`
      <div class="panel row">
        <div class="pl">
          <div class="ebtn">${tri(true)}</div>
          <svg width="20" height="20" viewBox="0 0 20 20"><circle cx="10" cy="10" r="9.3" fill="#87a556"/><circle cx="10" cy="10" r="4.6" fill="none" stroke="#eef3e2" stroke-width="2"/><circle cx="4" cy="10" r="1.7" fill="#eef3e2"/><circle cx="13" cy="4.9" r="1.7" fill="#eef3e2"/><circle cx="13" cy="15.1" r="1.7" fill="#eef3e2"/></svg>
          <span>Applications</span><span>Places</span><span>System</span>
          ${chromium(22)}
          <svg width="22" height="22" viewBox="0 0 22 22"><rect width="22" height="22" rx="7" fill="#3f8cf7"/><path fill="#fff" d="M4 7.5H12.4Q13.6 7.5 13.6 8.7V14.5H5.2Q4 14.5 4 13.3ZM14.4 9.6L18 7.4V14.6L14.4 12.4Z"/></svg>
          ${discord(22)}
          <svg width="23" height="24" viewBox="0 0 23 24"><rect width="23" height="24" fill="#5b6f2a"/><rect y="16" width="23" height="8" fill="#74432c"/><path d="M0 0H23V4L20 7L17 3L13 6L9 3L5 6L0 4Z" fill="#6ea33a"/><path d="M11.5 11.5C8 6.5 3 8 3 11.5S8 16.5 11.5 11.5S20 8 20 11.5S15 16.5 11.5 11.5Z" fill="none" stroke="#d8e07c" stroke-width="1.8"/></svg>
          <svg width="24" height="24" viewBox="0 0 24 24"><circle cx="12" cy="12" r="10.8" fill="#25333b" stroke="#1a84c6" stroke-width="1.8"/><path fill="none" stroke="#1a9be6" stroke-width="2.2" d="M8.2 20V9.5C8.2 6 10 5 12.8 5.4M5.5 11.5H11.5M14.2 8V20M17.6 8V17"/></svg>
          ${mu(24, false)}${vscode(22)}
        </div>
        <div class="sp"></div>
        <div class="pr">
          <svg width="22" height="24" viewBox="0 0 22 24"><path d="M3 20V11A8 8.5 0 0 1 19 11V20" fill="none" stroke="#77756f" stroke-width="1.8"/><rect x="1" y="15" width="5" height="8" rx="2" fill="#98968f"/><rect x="16" y="15" width="5" height="8" rx="2" fill="#98968f"/></svg>
          <span class="l">Пн, &nbsp;4 апр, 22:44</span>
          <svg width="16" height="16" viewBox="0 0 16 16"><path fill="#dfdbd2" d="M8 1C11.5 1 12 4 12 7C12 9.5 13 10.5 14 12H2C3 10.5 4 9.5 4 7C4 4 4.5 1 8 1ZM6.4 13H9.6A1.6 1.6 0 0 1 6.4 13Z"/><path d="M1.4 7C1.4 4.5 2 3 3 1.8M14.6 7C14.6 4.5 14 3 13 1.8" stroke="#dfdbd2" fill="none"/></svg>
          <svg width="22" height="20" viewBox="0 0 22 20"><path fill="#f0efee" d="M4 4.5L8 3.2L8.8 4.4H12.8L13.6 3.2L17.6 4.5C20 8 20.8 11.5 20.2 15.5C18.5 17 16.5 17.6 15 17.8L14 16H8L7 17.8C5 17.5 3.2 16.8 1.6 15.5C1 11.5 1.8 8 4 4.5Z"/><circle cx="7.5" cy="11.4" r="2" fill="#3c3b37"/><circle cx="14.3" cy="11.4" r="2" fill="#3c3b37"/><circle cx="17.4" cy="4" r="3.4" fill="#f04747"/></svg>
          <svg width="22" height="20" viewBox="0 0 22 20"><circle cx="11" cy="10" r="10" fill="#2ca0dc"/><path fill="#fff" d="M4 9.5L16 5V8H11L7 11.5Z"/><rect x="6" y="9" width="15" height="10.5" rx="2" fill="#e8353b"/><text x="13.5" y="17.4" font-size="8" fill="#fff" text-anchor="middle">..82</text></svg>
          <svg width="16" height="16" viewBox="0 0 16 16"><circle cx="8" cy="8" r="7.6" fill="#dfdbd2"/><path d="M4.8 11V5.4L8 8.6L11.2 5.4V11" fill="none" stroke="#3c3b37" stroke-width="1.7"/></svg>
          <svg width="16" height="14" viewBox="0 0 16 14"><g fill="none" stroke="#dfdbd2" stroke-width="1.4"><path d="M.8 4.4C5-.2 11-.2 15.2 4.4M3.2 7C6 4 10 4 12.8 7M5.5 9.6C7 8.2 9 8.2 10.5 9.6"/></g><circle cx="8" cy="11.4" r="1.3" fill="#dfdbd2"/></svg>
          <svg width="16" height="11" viewBox="0 0 16 11"><rect x=".6" y=".6" width="13.6" height="9.4" rx="1.5" fill="#dfdbd2" stroke="#9b988f"/><rect x="14.6" y="3.4" width="1.4" height="4" fill="#9b988f"/></svg>
          <span class="pc">(100%)</span>
          <svg width="16" height="14" viewBox="0 0 16 14"><path fill="#dfdbd2" d="M.5 5H3L6.5 2V12L3 9H.5Z"/><path d="M8.5 4.4Q10.4 7 8.5 9.6M10.6 2.8Q13.6 7 10.6 11.2M12.8 1.4Q16.6 7 12.8 12.6" fill="none" stroke="#dfdbd2" stroke-width="1.1"/></svg>
          <svg width="14" height="14" viewBox="0 0 14 14"><path d="M4.9 4.4A3.4 3.4 0 1 0 9.1 4.4" fill="none" stroke="#dfdbd2" stroke-width="1.6"/><path d="M7 1.6V7" stroke="#dfdbd2" stroke-width="1.5"/><circle cx="7" cy="7" r="5.6" fill="none" stroke="#dfdbd2" stroke-width="1.6" stroke-dasharray="1.6 2.8"/></svg>
          <svg width="5" height="18" viewBox="0 0 5 18"><path fill="#5d5b55" d="M0 1h4v4h-4zM0 7h4v4h-4zM0 13h4v4h-4z"/></svg>
          <span class="pc">en</span>
          <svg width="11" height="18" viewBox="0 0 11 18"><path fill="#8cc63a" d="M3.5 0h4v2H10.5V18H.5V2h3z"/><path fill="#4d7a16" d="M7 4L2.5 10.5H5L4 15L8.8 8.4H6Z"/></svg>
          <div class="ebtn">${tri(false)}</div>
        </div>
      </div>
      <div class="menu row">${["File", "Edit", "View", "Add", "Format", "Tools", "Plugins", "Help"].map((s) => html`<span><u>${s[0]}</u>${s.slice(1)}</span>`)}</div>

      <div class="tb tb1 row">${grip}<div class="m2"></div>
        <div class="cell">${mat("M14.5 2.5H6C4.9 2.5 4 3.4 4 4.5V19.5C4 20.6 4.9 21.5 6 21.5H18.5C19.6 21.5 20.5 20.6 20.5 19.5V8.5ZM18.4 19.5H6V4.5H13.7L18.4 9.2ZM11.2 10.5H13.2V13.3H16V15.3H13.2V18H11.2V15.3H8.4V13.3H11.2Z")}</div>
        <div class="cell">${mat("M20 6h-8l-2-2H4c-1.1 0-1.99.9-1.99 2L2 18c0 1.1.9 2 2 2h16c1.1 0 2-.9 2-2V8c0-1.1-.9-2-2-2zm0 12H4V8h16v10z")}</div>
        <div class="cell">${mat("M17 3H5c-1.11 0-2 .9-2 2v14c0 1.1.89 2 2 2h14c1.1 0 2-.9 2-2V7l-4-4zm-5 16c-1.66 0-3-1.34-3-3s1.34-3 3-3 3 1.34 3 3-1.34 3-3 3zm3-10H5V5h10v4z")}</div>
        <div class="cell"><svg width="24" height="24" viewBox="0 0 24 24"><path d="M8.5 16.5H6A4 4 0 0 1 5.8 8.6A6.3 6.3 0 0 1 17.8 8.8A4 4 0 0 1 18 16.5H15.5M12 20.5V11M8.4 14L12 10.4L15.6 14" fill="none" stroke="#f2f2f2" stroke-width="2"/></svg></div>
        <div class="cell">${mat("M19 8H5c-1.66 0-3 1.34-3 3v6h4v4h12v-4h4v-6c0-1.66-1.34-3-3-3zm-3 11H8v-5h8v5zm3-7c-.55 0-1-.45-1-1s.45-1 1-1 1 .45 1 1-.45 1-1 1zm-1-9H6v4h12V3z")}</div>
        <div class="cell">${mat("M12.5 8c-2.65 0-5.05.99-6.9 2.6L2 7v9h9l-3.62-3.62c1.39-1.16 3.16-1.88 5.12-1.88 3.54 0 6.55 2.31 7.6 5.5l2.37-.78C21.08 11.03 17.15 8 12.5 8z", "#8c8c8c")}</div>
        <div class="cell">${mat("M18.4 10.6C16.55 8.99 14.15 8 11.5 8c-4.65 0-8.58 3.03-9.96 7.22L3.9 16c1.05-3.19 4.05-5.5 7.6-5.5 1.95 0 3.73.72 5.12 1.88L13 16h9V7l-3.6 3.6z", "#8c8c8c")}</div>
        <div class="combo zoom">71%<div class="arr"></div></div>
        <div class="combo pv">Page View<div class="arr"></div></div>
        <div class="m10">${grip}</div>
        <div class="pbtn m4"><svg width="22" height="22" viewBox="0 0 22 22"><circle cx="11" cy="11" r="9.3" fill="none" stroke="#8a8a8a" stroke-width="1.8"/><g fill="#8a8a8a"><circle cx="5.5" cy="11" r="1.4"/><circle cx="16.5" cy="11" r="1.4"/><circle cx="7.2" cy="7" r="1.4"/><circle cx="14.8" cy="7" r="1.4"/><circle cx="11" cy="5.4" r="1.4"/><rect x="9" y="15.4" width="4" height="4.6"/></g></svg></div>
        <div class="cell c41">${mat("M6 6h2v12H6zm3.5 6l8.5 6V6z")}</div>
        <div class="pbtn">${mat("M7.5 5.2v13.4L18 11.9z", "#2f9bf0")}</div>
        <div class="cell c40">${mat("M12 4V1L8 5l4 4V6c3.31 0 6 2.69 6 6 0 1.01-.25 1.97-.7 2.8l1.46 1.46C19.54 15.03 20 13.57 20 12c0-4.42-3.58-8-8-8zm0 14c-3.31 0-6-2.69-6-6 0-1.01.25-1.97.7-2.8L5.24 7.74C4.46 8.97 4 10.43 4 12c0 4.42 3.58 8 8 8v3l4-4-4-4v3z")}</div>
        <div class="pbtn"><svg width="14" height="20" viewBox="0 0 14 20"><path fill="#828282" d="M.5 5.5h2.4v2.4H.5zM.5 12h2.4v2.4H.5zM6.5 0H8V20H6.5zM10 0h3V20h-3z"/></svg></div>
        <div class="cell c38"><svg width="20" height="20" viewBox="0 0 20 20"><path fill="#f2f2f2" d="M1 3h1v14H1zM3 3h1v14H3zM5 3L14.5 10L5 17zM14.4 0h1.4V20h-1.4zM17 0h2.4V20H17zM12.4 2h1v16h-1z"/></svg></div>
        <div class="cell c38"><svg width="16" height="22" viewBox="0 0 16 22"><path d="M5 2.5H10L10.6 5M12.4 12L14 19.6H2L5 2.5M2.5 17H13.5M7 14.5L14 5.5M11.6 6.5L14.2 8.8" fill="none" stroke="#f2f2f2" stroke-width="1.9"/></svg></div>
        <div class="m8">${grip}</div>
        <div class="pbtn cp">Concert Pitch</div>
        <div class="m10">${grip}</div>
        <svg class="m10" width="22" height="18" viewBox="0 0 22 18"><path fill="#a3a3a3" fill-rule="evenodd" d="M1 2.5H14L15 .6H20L21 2.5Q22 2.5 22 3.5V16Q22 17.5 20.5 17.5H1.5Q0 17.5 0 16V3.5Q0 2.5 1 2.5ZM2.5 5v1.8h3V5ZM13.5 4.6a5.2 5.2 0 1 0 .01 0zM13.5 6.6a3.2 3.2 0 1 1-.01 0z"/></svg>
        <div class="sp"></div>
        <svg width="22" height="16" viewBox="0 0 22 16"><rect width="22" height="16" rx="1" fill="#f4f4f4"/><path d="M0 .8L9 8.8Q11 10.4 13 8.8L22 .8M0 15.5L7.5 8M22 15.5L14.5 8" fill="none" stroke="#2c2c2c" stroke-width="1.2"/></svg>
        <span class="fb">Feedback</span>
      </div>

      <div class="tb tb2 row">${grip}
        <svg width="52" height="38" viewBox="10 0 52 38"><path d="M25.5 22V12.2L35.5 23V11.5" fill="none" stroke="#a3a3a3" stroke-width="3"/><ellipse cx="23.7" cy="23.6" rx="3.6" ry="2.8" transform="rotate(-20 23.7 23.6)" fill="#a3a3a3"/><path d="M50 16.5H59L54.5 21Z" fill="#777"/></svg>
        ${[4, 3, 3, 2, 1, 0].map((n) => tnote(n))}
        ${sq(svg`<ellipse cx="16.5" cy="27" rx="3.2" ry="2.1" transform="rotate(-25 16.5 27)" fill="none" stroke=${G} stroke-width="1.3"/><path d="M19.6 7.5V26.5" stroke=${G} stroke-width="1.2"/>`)}
        ${sq(wholeBody(18, 26))}
        ${sq(svg`${wholeBody(18, 26)}<path d="M11.6 22v8M13.2 22v8M23 22v8M24.6 22v8" stroke=${G}/>`)}
        ${sq(svg`${wholeBody(18, 26)}<path d="M11.6 22v8M13.2 22v8M23 22v8M24.6 7v23" stroke=${G} stroke-width="1.2"/>`)}
        ${dots(1)}${dots(2)}${dots(3)}${dots(4)}
        ${sq(svg`<g fill=${G}><ellipse cx="11.5" cy="16" rx="3" ry="4"/><ellipse cx="25.5" cy="16" rx="3" ry="4"/></g><path d="M9 15V28M23 15V28" stroke=${G} stroke-width="1.3"/><path d="M10 10.5C14 7.5 22 7.5 26 10.5" fill="none" stroke=${G} stroke-width="1.8"/>`)}
        <div class="pbtn rr">${sq(svg`${qrest(11, 19, "#838383", 1.25)}<path d="M17 10.5h9v3h-9z" fill="#838383"/><circle cx="18.5" cy="17" r="1.6" fill="#838383"/><path d="M18 18.4C21 19 23 17.5 24.6 15.5L20.4 27" stroke="#838383" fill="none" stroke-width="1.4"/>`, 32)}</div>
        <svg class="m8" width="37" height="38" viewBox="0 0 37 38"><path d="M15.5 16L21.5 22M21.5 16L15.5 22" stroke=${G} stroke-width="1.5"/><path fill=${G} d="M14 14.5h3.2v3.2H14zM19.8 14.5h3.2v3.2h-3.2zM14 20.3h3.2v3.2H14zM19.8 20.3h3.2v3.2h-3.2z"/></svg>
        ${sq(sharp(18.5, 19, G, 1.5))}
        ${sq(svg`<path d="M16 10V23M21 15V28" stroke=${G} stroke-width="1.2"/><path d="M15.5 17L21.5 15.2M15.5 23L21.5 21.2" stroke=${G} stroke-width="2"/>`)}
        ${sq(flat(18.5, 21.5, G, 1.4))}
        ${sq(svg`${flat(15.5, 21.5, G, 1.4)}${flat(21.8, 21.5, G, 1.4)}`)}
        <div class="m1">${sq(svg`<ellipse cx="13.5" cy="16" rx="3.2" ry="3.6" fill=${G}/><path d="M11 15V28.5M18 7.5V13" stroke=${G} stroke-width="1.5"/><path d="M14 14H19M21 13.5L26 17C22 20 24 22 26.5 21M21 22.5L25 18" fill="none" stroke=${G} stroke-width="1.5"/><circle cx="21.6" cy="22.4" r="2" fill=${G}/>`)}</div>
        <span class="num n1">1</span><span class="num">2</span><span class="num">3</span><span class="num">4</span>
        <div class="m9">${grip}</div>
        <div class="sp"></div>
        <div class="combo adv">Advanced edited<div class="arr"></div></div><span class="plus">+</span>
      </div>

      <div class="main">
        <div class="left">
          <div class="hd"><span>Palettes</span>${dockBtns}</div>
          <div class="search"><div class="box addp">Add Palettes</div>
            <div class="box"><svg width="12" height="12" viewBox="0 0 12 12"><circle cx="4.8" cy="4.8" r="3.8" fill="none" stroke="#9a9a9a" stroke-width="1.2"/><path d="M7.6 7.6L11.4 11.4" stroke="#9a9a9a" stroke-width="1.4"/></svg></div>
            <div class="box"><svg width="13" height="3" viewBox="0 0 13 3"><path fill="#9a9a9a" d="M.5 .5h2v2h-2zM5.5 .5h2v2h-2zM10.5 .5h2v2h-2z"/></svg></div></div>
          <div class="rule"></div>
          ${this.item("Clefs", true)}
          <div class="pal">${clefGrid()}</div>
          ${this.item("Tempo", true)}
          <div class="pal tempo">${TEMPO.map((t) => html`<div>${t}</div>`)}</div>
          ${["Key Signatures", "Dynamics", "Brackets", "Barlines", "Accidentals", "Time Signatures", "Articulations"].map((s) => this.item(s))}
          ${this.item("Ornaments", true)}
          <div class="pal orn">${ORN.map((o) => html`<div><svg width="42" height="24" viewBox="0 0 42 24">${o}</svg></div>`)}<div><span class="more">More</span></div></div>
          ${this.item("Breaths & Pauses")}${this.item("Grace Notes")}${this.item("Arpeggios & Glissandi", true)}
          <div class="pal arp">${["M4 4L0 2V4H0L4 0L8 4", "M3 3h1v1H3z", "", "M0 2H8", "M3 3h1v1H3z", "M3 1l1 3H2z", "", "M8 1L7 4H6z", "M0 3H6"].map((d) => html`<div><svg width="8" height="4" viewBox="0 0 8 4"><path d=${d} fill=${PC} stroke=${PC} stroke-width=".6"/></svg></div>`)}</div>
        </div>

        <div class="center">
          <div class="tabs">
            ${[["Untitled", "w1"], ["Gethsemane_частично_оркестрованный6_09", "w2"], ["Морская невеста", "w3"]].map(([s, c]) => html`<div class="tab1 ${c}"><span>${s}</span><svg width="12" height="12" viewBox="0 0 12 12"><path d="M1 1L11 11M11 1L1 11" stroke="#f2f2f2" stroke-width="1.8"/></svg></div>`)}
          </div>
          <svg class="canvas" width="1184" height="874" viewBox="290 158 1184 874">${score()}</svg>
        </div>

        <div class="right">
          <div class="hd"><span>Mixer</span>${dockBtns}</div>
          <div class="cols">
            <div class="form">
              <div class="r1"><div class="cb"><svg width="10" height="10" viewBox="0 0 10 10"><path d="M1.5 5L4 8L8.5 1.5" fill="none" stroke="#8a8a8a" stroke-width="1.5"/></svg></div>Play part only</div>
              <div class="r2"><span class="lb">Name:</span><div class="inp">Voice</div></div>
              <div class="r3"><span class="lb">Channel:</span><span>normal</span><span class="dr">Drumset</span><div class="cb2"></div></div>
              <div class="r4"><span class="lb">Sound:</span><div class="combo snd">Choir Aahs Expr.<div class="arr"></div></div></div>
              <div class="r5"><span class="lb">Volume:</span><div>${slider(72, 60)}</div><div class="sp"></div>${spin("127", "s49", false, true)}</div>
              <div class="r6"><span class="lb">Pan:</span><div>${slider(72, 30)}</div><div class="sp"></div>${spin("64", "s49")}</div>
              <div class="r7"><span>Track color:</span><div class="sw"></div></div>
            </div>
            <div class="grp">
              <div class="gt">MIDI</div>
              <div class="gb gb1">
                <div>Port:${spin("1", "s41", true, false)}<span>Channel:</span>${spin("7", "s41")}</div>
                <div>Reverb:${slider(76, 0)}${spin("0", "s49", true, false)}</div>
                <div>Chorus:${slider(76, 0)}${spin("0", "s49", true, false)}</div>
              </div>
              <div class="gt g2">Mute Voice</div>
              <div class="gb gb2">${[1, 2, 3, 4].map((n) => html`<div class="mb">${n}</div>`)}</div>
            </div>
          </div>
          <div class="coll"><svg width="8" height="5" viewBox="0 0 8 5"><path d="M0 5H8L4 0Z" fill="#050505"/></svg></div>
          <div class="mix">
            <div class="master">
              <svg width="82" height="572" viewBox="1485 410 82 572">${capGrad}
                <g stroke="#a5a39c">${Array.from({ length: 13 }, (_, i) => (i % 4 ? svg`<path d=${`M1516 ${429.5 + i * 44}h21`}/>` : svg`<path d=${`M1496 ${429.5 + i * 44}h61`}/>`))}</g>
                <rect x="1523" y="429" width="6" height="528" fill="#2c2c2c"/><rect x="1524" y="429" width="4" height="265" fill="#080808"/><rect x="1524" y="700" width="4" height="258" fill="#3d97ec"/>${cap(1526, 694)}</svg>
              <div class="mg">Master Gain</div>
              ${spin("-40.16dB", "s80")}
            </div>
            <div class="strips">
              <div class="sr">${[...STRIPS, { n: "", lvl: 574, mute: false, on: false, tilt: 0 }].map((s, i) => html`<div class="strip ${i === 0 ? "sel" : ""}">
                <div class="ab"><svg width="12" height="12" viewBox="0 0 12 12"><path d="M.5 6H11M6.5 1.3L11.2 6L6.5 10.7" fill="none" stroke=${s.on ? "#fff" : "#9a9a9a"} stroke-width="1.7"/></svg></div>
                ${i < 4 ? stripBody(s.lvl, s.mute, s.tilt) : html`<svg width="76" height="538"></svg>`}
                <div class="nm">${s.n}</div></div>`)}</div>
              <div class="sb"><div class="sbb"><svg width="5" height="8" viewBox="0 0 5 8"><path d="M5 0V8L0 4Z" fill="#c4c4c4"/></svg></div><div class="th"></div><div class="sbb"><svg width="5" height="8" viewBox="0 0 5 8"><path d="M0 0V8L5 4Z" fill="#c4c4c4"/></svg></div></div>
            </div>
          </div>
        </div>
      </div>

      <div class="status row"><span>Range Selection Start Measure: 14; Start Beat: 1 End Measure: 14; End Beat: 4.75</span><div class="sp"></div><span class="pp">Play</span><span>15:02:360</span></div>
      <div class="task">
        <div class="ebtn">${tri(true)}</div>
        <svg width="24" height="18" viewBox="0 0 24 18"><rect x="2" width="21" height="17" fill="#87b158"/><path fill="#e8f0dc" d="M4 3h3v3H4zM4 7.5h3v3H4zM4 12h3v3H4z"/></svg>
        <svg width="5" height="18" viewBox="0 0 5 18"><path fill="#5d5b55" d="M0 1h4v4h-4zM0 7h4v4h-4zM0 13h4v4h-4z"/></svg>
        <svg width="18" height="18" viewBox="0 0 18 18"><path d="M6 5L9 1.5L10.5 6Z" fill="#5f8f3c"/><path d="M2 9L6 8L6.5 12.5Z" fill="#a0892e"/><path d="M7 13.5L12 12L11 16.5Z" fill="#3a4b8f"/><path d="M11 9L15.5 12L12 13Z" fill="#8f2f4b"/></svg>
        <span>[Pentablet]</span>
        <div class="tk">${telegram}Telegram (2982)</div>
        <div class="tk">${chromium(16)}Messenger - Chromium</div>
        <div class="tk">${discord(16)}announcements - Discord</div>
        <div class="tk">${vscode(15)}10.jpg - Untitled (Work...</div>
        <div class="tk act">${mu(16, true)}MuseScore 3 Portable ...</div>
        <span></span>
        <div class="wsa">${mu(16, true)}</div><div class="ws"></div><div class="ws"></div><div class="ws"></div>
        <svg width="26" height="24" viewBox="0 0 26 24"><path d="M5 3H21L19.5 22H7Z" fill="#a9a8a4"/><ellipse cx="13" cy="3.5" rx="8.6" ry="2.4" fill="#6b6a66" stroke="#ddd" stroke-width="1"/><path d="M8 8L13 12L9 16L14 21M18 7L13 12L18 18" stroke="#5b5a57" fill="none"/></svg>
        <div class="ebtn">${tri(false)}</div>
      </div>`;
  }
}
